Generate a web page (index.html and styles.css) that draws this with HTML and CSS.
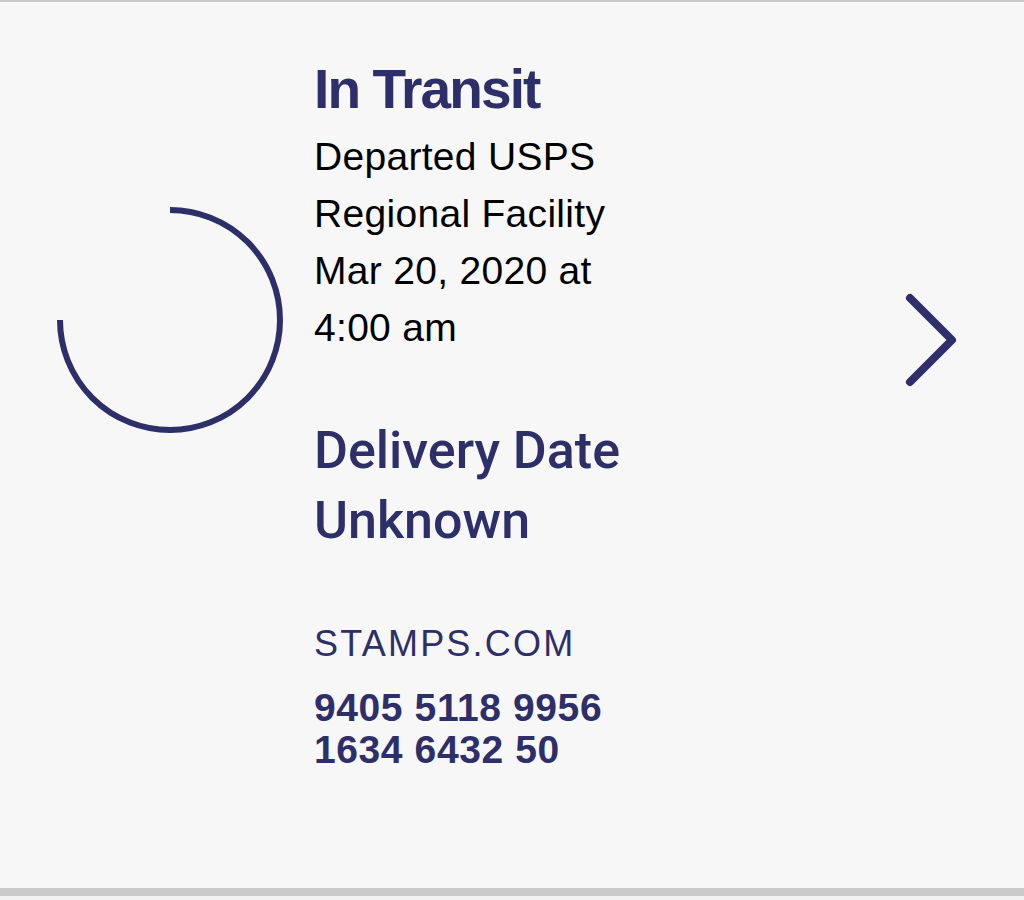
FILE: index.html
```html
<!DOCTYPE html>
<html lang="en">
<head>
<meta charset="utf-8">
<title>Tracking</title>
<link rel="stylesheet" href="styles.css">
</head>
<body>
<div class="card">
  <div class="status-icon">
    <svg width="230" height="230" viewBox="0 0 230 230" aria-hidden="true">
      <path d="M115 5 A110 110 0 1 1 5 115" fill="none" stroke="#2e2f68" stroke-width="6"/>
    </svg>
  </div>
  <div class="info">
    <h1 class="status">In Transit</h1>
    <p class="event">Departed USPS Regional Facility Mar 20, 2020 at 4:00 am</p>
    <h2 class="delivery">Delivery Date Unknown</h2>
    <p class="carrier">STAMPS.COM</p>
    <p class="tracking">9405 5118 9956 1634 6432 50</p>
  </div>
  <div class="chevron">
    <svg width="60" height="100" viewBox="0 0 60 100" aria-hidden="true">
      <path d="M10 8 L52 50 L10 92" fill="none" stroke="#2e2f68" stroke-width="8" stroke-linecap="round" stroke-linejoin="round"/>
    </svg>
  </div>
</div>
<div class="bottom"></div>
</body>
</html>
```
FILE: styles.css
```css
html, body {
  margin: 0;
  padding: 0;
}
body {
  background: #f2f2f2;
  font-family: "Liberation Sans", Arial, sans-serif;
  color: #2e2f68;
}
.card {
  display: flex;
  align-items: flex-start;
  background: #f7f7f7;
  border-top: 2px solid #cacaca;
  border-bottom: 8px solid #cacaca;
  box-sizing: border-box;
  height: 896px;
}
.status-icon {
  margin-left: 55px;
  margin-top: 203px;
  line-height: 0;
}
.info {
  margin-left: 29px;
  width: 330px;
  padding-top: 57px;
}
.status {
  margin: 0;
  font-size: 55px;
  line-height: 60px;
  font-weight: 700;
  letter-spacing: -1.9px;
}
.event {
  margin: 9px 0 0;
  font-size: 39px;
  line-height: 57px;
  letter-spacing: 0.3px;
  color: #000;
}
.delivery {
  margin: 60px 0 0;
  font-family: Roboto, "Liberation Sans", sans-serif;
  font-size: 52px;
  line-height: 70px;
  font-weight: 500;
}
.carrier {
  margin: 68px 0 0;
  font-size: 36px;
  line-height: 40px;
  letter-spacing: 2.2px;
}
.tracking {
  margin: 23px 0 0;
  font-size: 39px;
  line-height: 42px;
  font-weight: 700;
  letter-spacing: 0.6px;
}
.chevron {
  margin-left: auto;
  margin-right: 64px;
  margin-top: 288px;
  line-height: 0;
}
.bottom {
  height: 4px;
}
```
